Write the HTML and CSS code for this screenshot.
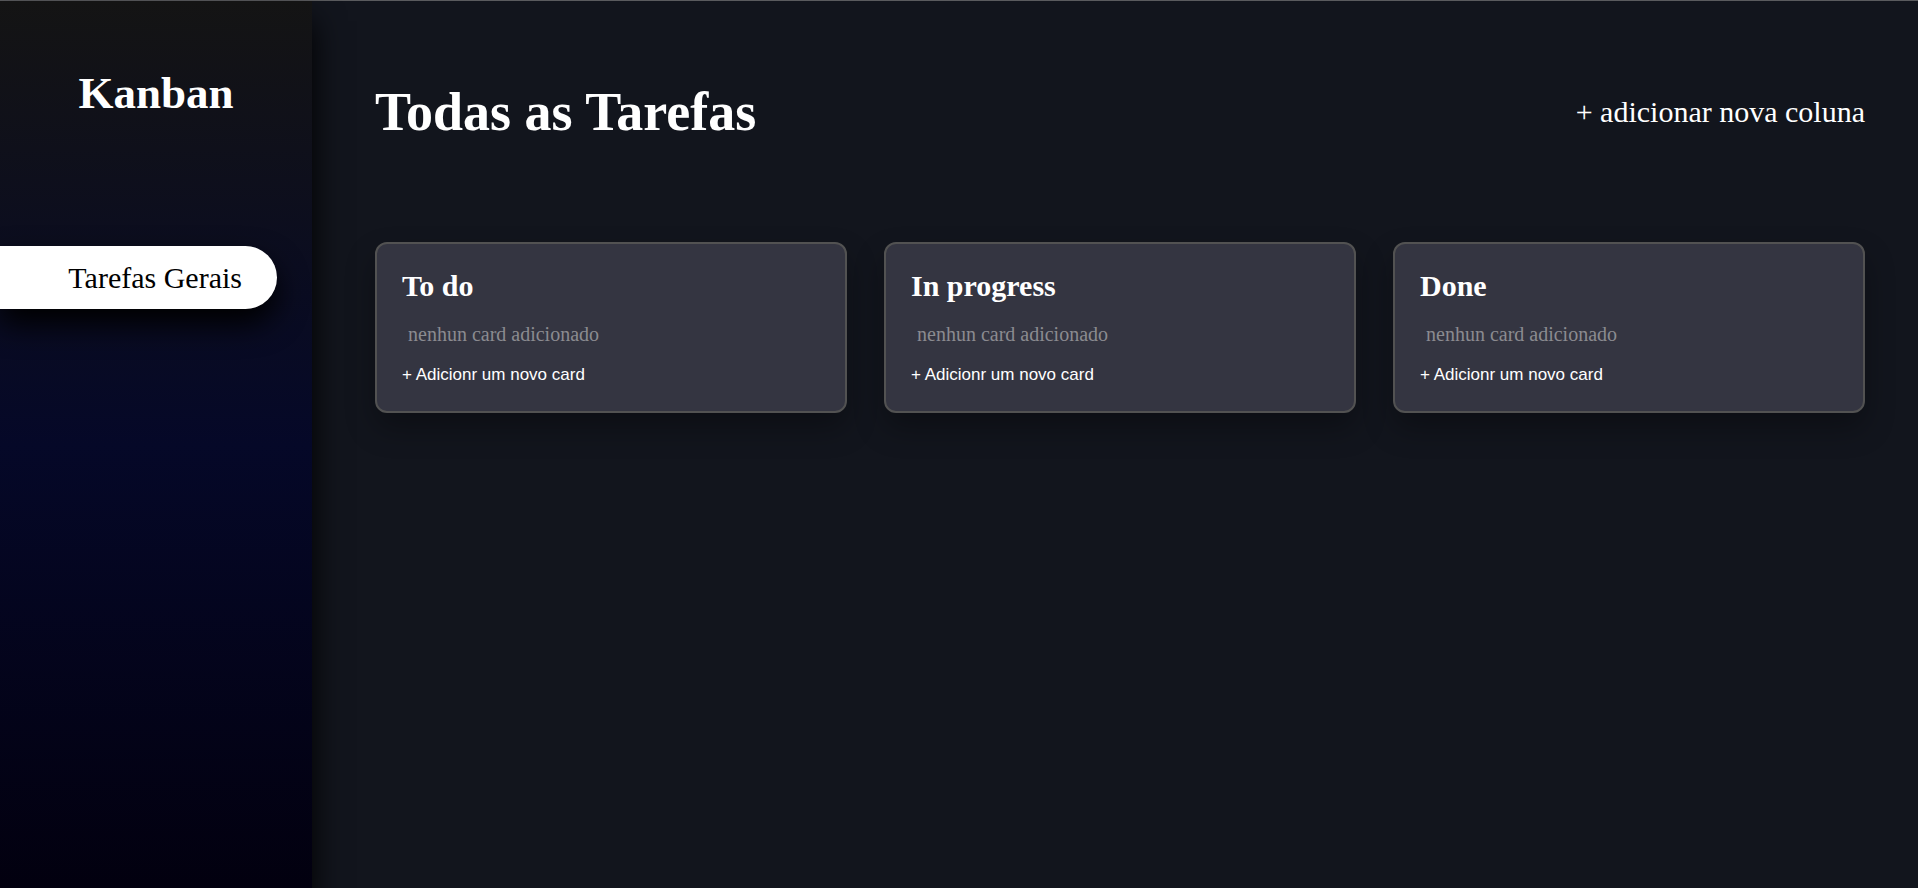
FILE: index.html
```html
<!DOCTYPE html>
<html lang="pt-BR">
<head>
<meta charset="utf-8">
<title>Kanban</title>
<link rel="stylesheet" href="styles.css">
</head>
<body>
<div class="app">
  <aside class="sidebar">
    <h1 class="brand">Kanban</h1>
    <nav class="menu">
      <a class="menu-item" href="#">Tarefas Gerais</a>
    </nav>
  </aside>
  <main class="board">
    <header class="board-header">
      <h2 class="board-title">Todas as Tarefas</h2>
      <button class="add-column" type="button">+ adicionar nova coluna</button>
    </header>
    <div class="columns">
      <section class="column">
        <h3 class="column-title">To do</h3>
        <p class="column-empty">nenhun card adicionado</p>
        <button class="add-card" type="button">+ Adicionr um novo card</button>
      </section>
      <section class="column">
        <h3 class="column-title">In progress</h3>
        <p class="column-empty">nenhun card adicionado</p>
        <button class="add-card" type="button">+ Adicionr um novo card</button>
      </section>
      <section class="column">
        <h3 class="column-title">Done</h3>
        <p class="column-empty">nenhun card adicionado</p>
        <button class="add-card" type="button">+ Adicionr um novo card</button>
      </section>
    </div>
  </main>
</div>
</body>
</html>
```
FILE: styles.css
```css
* {
  box-sizing: border-box;
  margin: 0;
  padding: 0;
}

body {
  background: #12151d;
  color: #fff;
  font-family: "Liberation Serif", "Times New Roman", serif;
}

button {
  background: none;
  border: none;
  color: inherit;
  cursor: pointer;
}

.app {
  display: flex;
  min-height: 100vh;
  border-top: 1px solid #5a5b5e;
}

.sidebar {
  flex: 0 0 312px;
  padding-top: 66px;
  background: linear-gradient(#141414, #050828 50%, #02000f);
  box-shadow: 0 20px 30px #000;
}

.brand {
  font-size: 45px;
  line-height: 52px;
  text-align: center;
}

.menu {
  display: flex;
  flex-direction: column;
  margin: 127px 35px 0 0;
}

.menu-item {
  padding: 0 35px;
  border-radius: 0 32px 32px 0;
  background: #fff;
  box-shadow: 0 15px 30px #000;
  color: #000;
  font-size: 30px;
  line-height: 63px;
  text-align: right;
  text-decoration: none;
}

.board {
  flex: 1;
  padding: 80px 53px 53px 63px;
}

.board-header {
  display: flex;
  align-items: center;
  justify-content: space-between;
  margin-bottom: 99px;
}

.board-title {
  font-size: 54px;
  line-height: 62px;
}

.add-column {
  font-family: inherit;
  font-size: 30px;
}

.columns {
  display: grid;
  grid-template-columns: repeat(3, 1fr);
  gap: 37px;
}

.column {
  padding: 25px;
  border: 2px solid #525252;
  border-radius: 12px;
  background: #343541;
  box-shadow: 0 15px 30px rgba(0, 0, 0, 0.3);
}

.column-title {
  font-size: 30px;
  line-height: 34px;
}

.column-empty {
  margin: 20px 6px 18px;
  color: #8b8b90;
  font-size: 20px;
  line-height: 22px;
}

.add-card {
  display: block;
  font-family: "Liberation Sans", Arial, sans-serif;
  font-size: 17px;
  line-height: 23px;
}
```
